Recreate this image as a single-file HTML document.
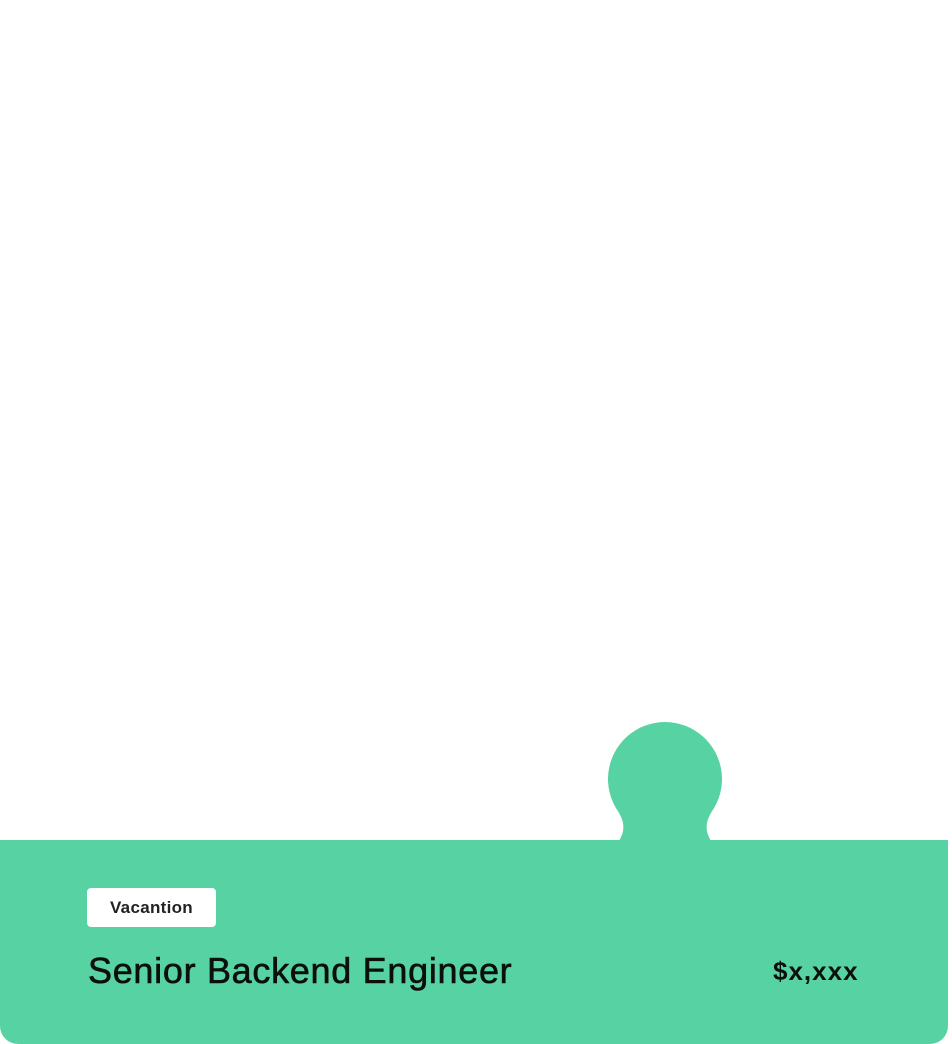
<!DOCTYPE html>
<html><head><meta charset="utf-8"><style>
html,body{margin:0;padding:0;background:#fff;width:952px;height:1044px;overflow:hidden;font-family:"Liberation Sans",sans-serif;}
.panel{position:absolute;left:0;top:840px;width:948px;height:204px;background:#57d2a3;border-radius:0 0 18px 18px;}
.badge{position:absolute;left:87px;top:888px;width:129px;height:39px;background:#fff;border-radius:4px;color:#222;font-size:17px;font-weight:bold;text-align:center;line-height:39px;letter-spacing:0.3px;}
.title{position:absolute;left:88px;top:950px;font-size:36px;color:#0b0f0d;white-space:nowrap;letter-spacing:0.7px;-webkit-text-stroke:0.6px #0b0f0d;}
.price{position:absolute;left:773px;top:956px;font-size:26px;font-weight:bold;color:#0b0f0d;letter-spacing:1px;}
</style></head><body>
<svg style="position:absolute;left:0;top:0" width="952" height="1044">
<path d="M619 841 C623 834 624 829 623 823 C622 818 620 815 618.5 812 A57 57 0 1 1 711.5 812 C710 815 708 818 707 823 C706 829 707 834 711 841 Z" fill="#57d2a3"/>
</svg>
<div class="panel"></div>
<div class="badge">Vacantion</div>
<div class="title">Senior Backend Engineer</div>
<div class="price">$x,xxx</div>
</body></html>
